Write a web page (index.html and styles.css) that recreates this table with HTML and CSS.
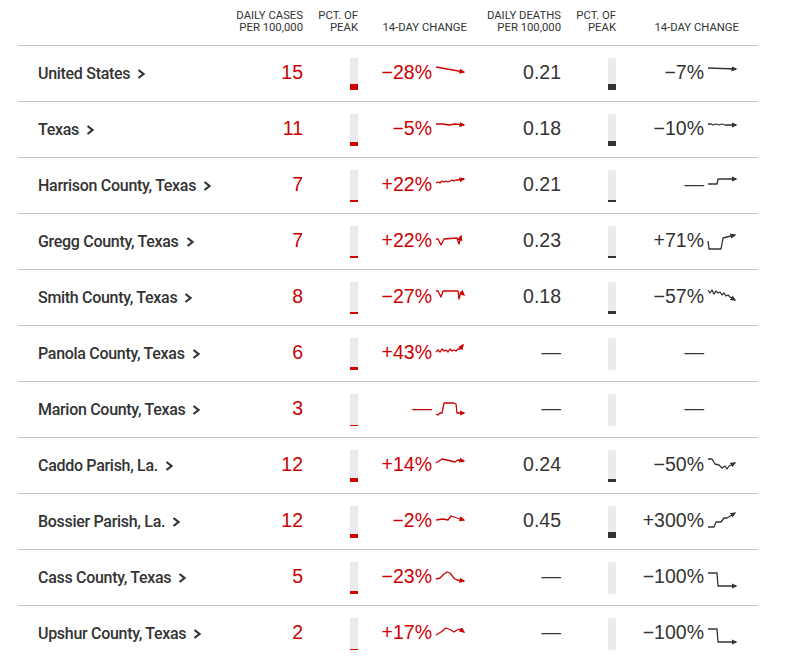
FILE: index.html
```html
<!DOCTYPE html>
<html lang="en">
<head>
<meta charset="utf-8">
<title>Cases and deaths</title>
<link rel="stylesheet" href="styles.css">
</head>
<body>
<svg class="defs" width="0" height="0" aria-hidden="true">
  <defs>
    <marker id="ar" viewBox="0 0 6 6" refX="4.5" refY="3" markerWidth="6" markerHeight="6" markerUnits="userSpaceOnUse" orient="auto">
      <path d="M0,0.4 L6,3 L0,5.6 Z" fill="#cc0000"/>
    </marker>
    <marker id="ad" viewBox="0 0 6 6" refX="4.5" refY="3" markerWidth="6" markerHeight="6" markerUnits="userSpaceOnUse" orient="auto">
      <path d="M0,0.4 L6,3 L0,5.6 Z" fill="#333333"/>
    </marker>
  </defs>
</svg>

<div class="table">
  <div class="row head">
    <div></div>
    <div class="h">Daily cases<br>per 100,000</div>
    <div class="h">Pct. of<br>peak</div>
    <div class="h">14-day change</div>
    <div class="h">Daily deaths<br>per 100,000</div>
    <div class="h">Pct. of<br>peak</div>
    <div class="h">14-day change</div>
    <div></div>
  </div>

  <div class="row">
    <div class="name">United States<svg class="chev" viewBox="0 0 8 10"><polyline points="1.5,1 6.5,5 1.5,9"/></svg></div>
    <div class="num red">15</div>
    <div class="barcell"><div class="bar"><div class="fill fill-red" style="height:6px"></div></div></div>
    <div class="chg red"><span class="pct">−28%</span><svg class="spark" viewBox="0 -1 32 25"><polyline class="ln-r" points="1,5 29,10"/></svg></div>
    <div class="num">0.21</div>
    <div class="barcell"><div class="bar"><div class="fill fill-dark" style="height:6px"></div></div></div>
    <div class="chg"><span class="pct">−7%</span><svg class="spark" viewBox="0 -1 32 25"><polyline class="ln-d" points="1,6 29,7"/></svg></div>
    <div></div>
  </div>

  <div class="row">
    <div class="name">Texas<svg class="chev" viewBox="0 0 8 10"><polyline points="1.5,1 6.5,5 1.5,9"/></svg></div>
    <div class="num red">11</div>
    <div class="barcell"><div class="bar"><div class="fill fill-red" style="height:4px"></div></div></div>
    <div class="chg red"><span class="pct">−5%</span><svg class="spark" viewBox="0 -1 32 25"><polyline class="ln-r" points="1,6 8,6 14,7 20,6 29,7"/></svg></div>
    <div class="num">0.18</div>
    <div class="barcell"><div class="bar"><div class="fill fill-dark" style="height:5px"></div></div></div>
    <div class="chg"><span class="pct">−10%</span><svg class="spark" viewBox="0 -1 32 25"><polyline class="ln-d" points="1,6 4,6 6,7 9,6 12,7 15,6 18,7 22,7 29,7"/></svg></div>
    <div></div>
  </div>

  <div class="row">
    <div class="name">Harrison County, Texas<svg class="chev" viewBox="0 0 8 10"><polyline points="1.5,1 6.5,5 1.5,9"/></svg></div>
    <div class="num red">7</div>
    <div class="barcell"><div class="bar"><div class="fill fill-red" style="height:2px"></div></div></div>
    <div class="chg red"><span class="pct">+22%</span><svg class="spark" viewBox="0 -1 32 25"><polyline class="ln-r" points="1,9 3,8 5,9 7,7 9,8 11,7 13,8 15,7 17,6 19,7 21,6 23,6 29,5"/></svg></div>
    <div class="num">0.21</div>
    <div class="barcell"><div class="bar"><div class="fill fill-dark" style="height:2px"></div></div></div>
    <div class="chg"><span class="pct">—</span><svg class="spark" viewBox="0 -1 32 25"><polyline class="ln-d" points="1,10 10,10 11,5 29,5"/></svg></div>
    <div></div>
  </div>

  <div class="row">
    <div class="name">Gregg County, Texas<svg class="chev" viewBox="0 0 8 10"><polyline points="1.5,1 6.5,5 1.5,9"/></svg></div>
    <div class="num red">7</div>
    <div class="barcell"><div class="bar"><div class="fill fill-red" style="height:2px"></div></div></div>
    <div class="chg red"><span class="pct">+22%</span><svg class="spark" viewBox="0 -1 32 25"><polyline class="ln-r" points="1,9 3,9 6,15 9,9 22,8 24,14 26,6"/></svg></div>
    <div class="num">0.23</div>
    <div class="barcell"><div class="bar"><div class="fill fill-dark" style="height:2px"></div></div></div>
    <div class="chg"><span class="pct">+71%</span><svg class="spark" viewBox="0 -1 32 25"><polyline class="ln-d" points="1,11 2,19 14,19 16,8 20,7 28,5"/></svg></div>
    <div></div>
  </div>

  <div class="row">
    <div class="name">Smith County, Texas<svg class="chev" viewBox="0 0 8 10"><polyline points="1.5,1 6.5,5 1.5,9"/></svg></div>
    <div class="num red">8</div>
    <div class="barcell"><div class="bar"><div class="fill fill-red" style="height:2px"></div></div></div>
    <div class="chg red"><span class="pct">−27%</span><svg class="spark" viewBox="0 -1 32 25"><polyline class="ln-r" points="1,5 3,5 6,11 8,5 21,5 23,5 24,13 26,6 29,9"/></svg></div>
    <div class="num">0.18</div>
    <div class="barcell"><div class="bar"><div class="fill fill-dark" style="height:3px"></div></div></div>
    <div class="chg"><span class="pct">−57%</span><svg class="spark" viewBox="0 -1 32 25"><polyline class="ln-d" points="1,4 3,7 5,4 7,8 9,5 11,7 13,6 15,9 17,7 19,10 21,9 23,11 28,14"/></svg></div>
    <div></div>
  </div>

  <div class="row">
    <div class="name">Panola County, Texas<svg class="chev" viewBox="0 0 8 10"><polyline points="1.5,1 6.5,5 1.5,9"/></svg></div>
    <div class="num red">6</div>
    <div class="barcell"><div class="bar"><div class="fill fill-red" style="height:3px"></div></div></div>
    <div class="chg red"><span class="pct">+43%</span><svg class="spark" viewBox="0 -1 32 25"><polyline class="ln-r" points="1,10 3,8 5,10 7,7 9,9 11,8 13,10 15,7 17,9 19,8 21,9 23,7 25,7 28,3"/></svg></div>
    <div class="num">—</div>
    <div class="barcell"><div class="bar"></div></div>
    <div class="chg"><span class="pct">—</span><span class="spark"></span></div>
    <div></div>
  </div>

  <div class="row">
    <div class="name">Marion County, Texas<svg class="chev" viewBox="0 0 8 10"><polyline points="1.5,1 6.5,5 1.5,9"/></svg></div>
    <div class="num red">3</div>
    <div class="barcell"><div class="bar"><div class="fill fill-red" style="height:1px"></div></div></div>
    <div class="chg red"><span class="pct">—</span><svg class="spark" viewBox="0 -1 32 25"><polyline class="ln-r" points="1,16 3,17 5,15 7,15 9,5 19,5 21,6 22,15 29,15"/></svg></div>
    <div class="num">—</div>
    <div class="barcell"><div class="bar"></div></div>
    <div class="chg"><span class="pct">—</span><span class="spark"></span></div>
    <div></div>
  </div>

  <div class="row">
    <div class="name">Caddo Parish, La.<svg class="chev" viewBox="0 0 8 10"><polyline points="1.5,1 6.5,5 1.5,9"/></svg></div>
    <div class="num red">12</div>
    <div class="barcell"><div class="bar"><div class="fill fill-red" style="height:4px"></div></div></div>
    <div class="chg red"><span class="pct">+14%</span><svg class="spark" viewBox="0 -1 32 25"><polyline class="ln-r" points="1,9 4,7 7,5 12,6 16,7 20,8 23,6 29,7"/></svg></div>
    <div class="num">0.24</div>
    <div class="barcell"><div class="bar"><div class="fill fill-dark" style="height:3px"></div></div></div>
    <div class="chg"><span class="pct">−50%</span><svg class="spark" viewBox="0 -1 32 25"><polyline class="ln-d" points="1,5 5,5 8,10 12,11 15,14 18,12 20,15 22,12 28,9"/></svg></div>
    <div></div>
  </div>

  <div class="row">
    <div class="name">Bossier Parish, La.<svg class="chev" viewBox="0 0 8 10"><polyline points="1.5,1 6.5,5 1.5,9"/></svg></div>
    <div class="num red">12</div>
    <div class="barcell"><div class="bar"><div class="fill fill-red" style="height:4px"></div></div></div>
    <div class="chg red"><span class="pct">−2%</span><svg class="spark" viewBox="0 -1 32 25"><polyline class="ln-r" points="1,10 8,9 13,10 16,6 19,7 22,8 29,10"/></svg></div>
    <div class="num">0.45</div>
    <div class="barcell"><div class="bar"><div class="fill fill-dark" style="height:6px"></div></div></div>
    <div class="chg"><span class="pct">+300%</span><svg class="spark" viewBox="0 -1 32 25"><polyline class="ln-d" points="1,17 7,17 9,12 14,12 17,8 20,8 28,3"/></svg></div>
    <div></div>
  </div>

  <div class="row">
    <div class="name">Cass County, Texas<svg class="chev" viewBox="0 0 8 10"><polyline points="1.5,1 6.5,5 1.5,9"/></svg></div>
    <div class="num red">5</div>
    <div class="barcell"><div class="bar"><div class="fill fill-red" style="height:3px"></div></div></div>
    <div class="chg red"><span class="pct">−23%</span><svg class="spark" viewBox="0 -1 32 25"><polyline class="ln-r" points="1,13 5,12 9,8 12,6 15,7 18,11 20,13 22,14 29,15"/></svg></div>
    <div class="num">—</div>
    <div class="barcell"><div class="bar"></div></div>
    <div class="chg"><span class="pct">−100%</span><svg class="spark" viewBox="0 -1 32 25"><polyline class="ln-d" points="1,7 10,7 11,20 29,20"/></svg></div>
    <div></div>
  </div>

  <div class="row">
    <div class="name">Upshur County, Texas<svg class="chev" viewBox="0 0 8 10"><polyline points="1.5,1 6.5,5 1.5,9"/></svg></div>
    <div class="num red">2</div>
    <div class="barcell"><div class="bar"><div class="fill fill-red" style="height:1px"></div></div></div>
    <div class="chg red"><span class="pct">+17%</span><svg class="spark" viewBox="0 -1 32 25"><polyline class="ln-r" points="1,13 6,10 11,6 16,8 19,10 22,8 25,7 29,10"/></svg></div>
    <div class="num">—</div>
    <div class="barcell"><div class="bar"></div></div>
    <div class="chg"><span class="pct">−100%</span><svg class="spark" viewBox="0 -1 32 25"><polyline class="ln-d" points="1,7 10,7 11,20 29,20"/></svg></div>
    <div></div>
  </div>
</div>
</body>
</html>
```

FILE: styles.css
```css
body {
  margin: 0;
  background: #ffffff;
  color: #333333;
  font-family: Roboto, "Liberation Sans", Arial, sans-serif;
}

.defs {
  display: block;
  width: 0;
  height: 0;
  overflow: hidden;
}

.table {
  margin-left: 18px;
  width: 740px;
}

.row {
  display: grid;
  grid-template-columns: 212px 73px 55px 109px 94px 55px 123px 19px;
  height: 55px;
  border-bottom: 1px solid #c4c4c4;
  align-items: center;
}

.head {
  height: 35px;
  padding-bottom: 10px;
  align-items: end;
}

.h {
  font-size: 11.3px;
  line-height: 12.7px;
  text-transform: uppercase;
  text-align: right;
  color: #333333;
  white-space: nowrap;
}

.name {
  padding-left: 20px;
  display: flex;
  align-items: center;
  font-size: 16px;
  font-weight: 500;
  letter-spacing: -0.3px;
  color: #333333;
  white-space: nowrap;
}

.chev {
  width: 8px;
  height: 10px;
  margin-left: 7px;
  flex: none;
}

.chev polyline {
  fill: none;
  stroke: #333333;
  stroke-width: 2.2;
}

.num {
  font-family: "Liberation Sans", Arial, sans-serif;
  font-size: 19.5px;
  text-align: right;
  padding-bottom: 3px;
  color: #333333;
}

.red {
  color: #cc0000;
}

.barcell {
  display: flex;
  justify-content: flex-end;
}

.bar {
  width: 8px;
  height: 32px;
  margin-top: 1px;
  background: #ebebeb;
  display: flex;
  flex-direction: column;
  justify-content: flex-end;
}

.fill {
  width: 100%;
}

.fill-red {
  background: #cc0000;
}

.fill-dark {
  background: #333333;
}

.chg {
  align-self: stretch;
  display: flex;
  align-items: center;
  justify-content: flex-end;
  font-family: "Liberation Sans", Arial, sans-serif;
  font-size: 19.5px;
  white-space: nowrap;
}

.pct {
  margin-bottom: 3px;
}

.spark {
  display: block;
  width: 32px;
  height: 25px;
  margin-left: 3px;
  flex: none;
  overflow: visible;
}

.spark polyline {
  fill: none;
  stroke-width: 1.3;
  stroke-linejoin: round;
  stroke-linecap: butt;
}

.ln-r {
  stroke: #cc0000;
  marker-end: url(#ar);
}

.ln-d {
  stroke: #333333;
  marker-end: url(#ad);
}
```
